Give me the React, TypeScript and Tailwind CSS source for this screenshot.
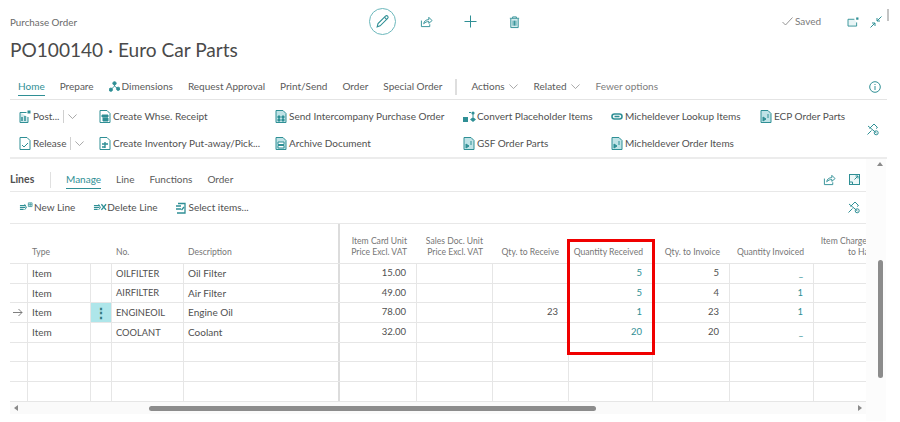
import React from "react";

const T = "#2f8f95";

function Ico({ w = 14, h = 14, vb = "0 0 14 14", children, className = "" }: { w?: number; h?: number; vb?: string; children: React.ReactNode; className?: string }) {
  return (
    <svg width={w} height={h} viewBox={vb} fill="none" stroke={T} strokeWidth="1" className={"shrink-0 " + className}>
      {children}
    </svg>
  );
}

const Pencil = () => (
  <Ico w={15} h={15}>
    <path d="M2 12l.8-3L9.8 2a1.3 1.3 0 0 1 2 2L4.8 11z" />
    <path d="M8.8 3l2.2 2.2" />
  </Ico>
);
const Share = () => (
  <Ico w={13} h={13}>
    <path d="M1.500 6v6.500h9V10" />
    <path d="M4 9.500c.3-3 2.500-4.500 5.500-4.500V2.500L13 6l-3.500 3V7C7.500 7 5.500 7.800 4 9.500z" />
  </Ico>
);
const Plus = () => (
  <Ico w={13} h={13} vb="0 0 13 13">
    <path d="M6.500 0.500v12M0.500 6.500h12" />
  </Ico>
);
const Trash = () => (
  <Ico w={13} h={14}>
    <path d="M3 3.500v9.500h8V3.500" fill="#d5ecee" />
    <path d="M2 3h10M5 3V1.500h4V3M5.500 5.500V11M7 5.500V11M8.500 5.500V11" />
  </Ico>
);
const PopOut = () => (
  <Ico w={12} h={10} vb="0 0 13 11">
    <path d="M8 2.500H1v7.500h9.500V6" fill="#e8f5f6" />
    <rect x="10" y="0.500" width="2.500" height="2.500" fill={T} stroke="none" />
  </Ico>
);
const Collapse = () => (
  <Ico w={12} h={12} vb="0 0 12 12">
    <path d="M0.500 11.500L5 7M2 7h3v3" />
    <path d="M11.500 0.500L7 5M7 2v3h3" />
  </Ico>
);
const Info = () => (
  <Ico w={12} h={12} vb="0 0 12 12">
    <circle cx="6" cy="6" r="5.300" />
    <path d="M6 5v4M6 3v1" />
  </Ico>
);
const Pin = () => (
  <Ico w={12} h={13} vb="0 0 12 13">
    <path d="M0.500 11.500L4.500 7.500M2.500 5.500L7 1l3.500 3.500-1.500 1" />
    <path d="M1 3l8.500 7" />
    <circle cx="9.200" cy="9.800" r="2" />
  </Ico>
);
const Expand = () => (
  <Ico w={11} h={11} vb="0 0 11 11">
    <rect x="0.500" y="0.500" width="10" height="10" fill="#eef8f8" />
    <path d="M5.500 5.500L9 2M6.500 2H9v2.500M0.500 8h3v2.500" />
  </Ico>
);
const Chevron = ({ c = "#8a8a8a" }: { c?: string }) => (
  <svg width="9" height="5" viewBox="0 0 11 6" fill="none" stroke={c} strokeWidth="0.900" className="shrink-0">
    <path d="M0.500 0.500l5 5 5-5" />
  </svg>
);
const Branch = () => (
  <Ico w={11} h={11} vb="0 0 12 11">
    <path d="M6 1v4M6 5L2 9M6 5l4 3" />
    <circle cx="6" cy="2" r="1.800" fill={T} />
    <circle cx="2" cy="9" r="1.800" fill={T} />
    <circle cx="10" cy="8" r="1.800" fill={T} />
  </Ico>
);
const DocA = ({ variant }: { variant: string }) => (
  <Ico w={12} h={13} vb="0 0 12 13">
    {variant === "post" ? (
      <>
        <path d="M1 2.500h6.500M1 2.500v10h8V7" fill="#cfe9eb" />
        <rect x="8.500" y="0.500" width="3" height="3" fill={T} stroke="none" />
        <path d="M3 7v4M6 6v5" strokeWidth="1.500" />
      </>
    ) : (
      <path d="M1 .500h7l3 3v9H1z" fill={variant === "xl" || variant === "send" || variant === "arch" ? "#bfe3e6" : "#fff"} />
    )}
    {variant === "xl" && <path d="M3 7l3 2-3 2zM7 5h2M7 7h2" stroke={T} fill={T} />}
    {variant === "release" && <path d="M3 8l2 2 4-4" />}
    {variant === "recv" && <path d="M3 5h6v2H3zM4 8h5v3H4z" fill={T} />}
    {variant === "pick" && <path d="M3 7h6M6 5v6M3 10h3" strokeWidth="1.400" />}
    {variant === "send" && <path d="M3 6h2v2H3zM7 6h2v2H7zM3 9h2v2H3zM7 9h2v2H7z" fill={T} />}
    {variant === "arch" && <path d="M3 5h6v2.500H3zM3 8.500h6V11H3z" fill="#fff" />}
  </Ico>
);
const ConvertIco = () => (
  <svg width="14" height="12" viewBox="0 0 14 12" className="shrink-0">
    <rect x="0" y="6" width="5" height="5" fill={T} />
    <path d="M10 6l3 2.500-3 2.500-3-2.500z" fill={T} />
    <circle cx="10" cy="2" r="1.600" fill={T} />
    <path d="M10 3v3M6 1.500h2" stroke={T} fill="none" />
  </svg>
);
const LinkIco = () => (
  <svg width="12" height="7" viewBox="0 0 12 7" fill="none" stroke={T} strokeWidth="1.600" className="shrink-0">
    <rect x="1" y="1" width="10" height="5" rx="2.500" />
    <path d="M3.500 3.500h5" />
  </svg>
);
const NewLineIco = ({ x = false }: { x?: boolean }) => (
  <svg width="14" height="11" viewBox="0 0 15 11" fill="none" stroke={T} strokeWidth="1" className="shrink-0">
    <path d="M1 3.500h6M1 5.500h6M1 7.500h4" strokeWidth="1.300" />
    <path d="M6 2l2 3.500L6 8" />
    {x ? <path d="M9 2l5 6M14 2L9 8" strokeWidth="1.400" /> : <path d="M10 .500h4v4h-4zM10 2.500h4M12 .500v4" strokeWidth=".8" />}
  </svg>
);
const SelectIco = () => (
  <svg width="12" height="12" viewBox="0 0 12 12" fill="none" stroke={T} strokeWidth="1.300" className="shrink-0">
    <path d="M3 1.500h7v9.500H2M1 4h5M1 7h5" />
    <path d="M9 5L6.500 8" />
  </svg>
);

function Tool({ icon, label }: { icon: React.ReactNode; label: string }) {
  return (
    <div className="flex h-[27px] w-full items-center">
      <span className="flex w-[14px] shrink-0 justify-start">{icon}</span>
      <span className="whitespace-nowrap">{label}</span>
    </div>
  );
}

const colClass = [
  "w-[18px]",
  "w-[63px]",
  "w-[21px]",
  "w-[72px]",
  "w-[156px]",
  "w-[77px]",
  "w-[76px]",
  "w-[76px]",
  "w-[84px]",
  "w-[77px]",
  "w-[84px]",
  "w-[53px]",
];

type Row = { h: string; sel?: boolean; no?: string; type?: string; desc?: string; price?: string; rec?: string; qr?: string; qi?: string; qinv?: string };

const rows: Row[] = [
  { h: "h-[20px]", type: "Item", no: "OILFILTER", desc: "Oil Filter", price: "15.00", qr: "5", qi: "5", qinv: "_" },
  { h: "h-[19px]", type: "Item", no: "AIRFILTER", desc: "Air Filter", price: "49.00", qr: "5", qi: "4", qinv: "1" },
  { h: "h-[20px]", sel: true, type: "Item", no: "ENGINEOIL", desc: "Engine Oil", price: "78.00", rec: "23", qr: "1", qi: "23", qinv: "1" },
  { h: "h-[20px]", type: "Item", no: "COOLANT", desc: "Coolant", price: "32.00", qr: "20", qi: "20", qinv: "_" },
  { h: "h-[19px]" },
  { h: "h-[20px]" },
  { h: "h-[20px]" },
];

function Cell({ i, children, right, teal, extra = "" }: { i: number; children?: React.ReactNode; right?: boolean; teal?: boolean; extra?: string }) {
  const bar = i === 4 ? "border-r-2 border-r-[#dcdcdc]" : i === 11 ? "" : "border-r border-r-[#e6e6e6]";
  return (
    <div
      className={
        "flex h-full shrink-0 items-center overflow-hidden " +
        colClass[i] + " " + bar + " " +
        (right ? "justify-end pr-[10px] text-[9.500px] " : "pl-[4px] ") +
        (teal ? "text-[#2f8f95] " : "") + extra
      }
    >
      {children}
    </div>
  );
}

function HeadCell({ i, children, right }: { i: number; children?: React.ReactNode; right?: boolean }) {
  return (
    <div
      className={
        "flex h-full shrink-0 items-end overflow-hidden whitespace-nowrap pb-[5px] leading-[11px] " +
        colClass[i] + " " +
        (i === 4 ? "border-r-2 border-r-[#dcdcdc] " : "") +
        (right ? "justify-end pr-[10px] text-right " : "pl-[4px] ")
      }
    >
      {children}
    </div>
  );
}

export default function App() {
  return (
    <div className="relative flex h-[422px] w-[900px] flex-col overflow-hidden bg-white font-['Lato',sans-serif] text-[10px] text-[#505050]">
      {/* header */}
      <div className="ml-[10px] mt-[8px] flex h-[27px] items-center">
        <div className="mt-[1px] w-[359px] text-[9.800px] text-[#6a6a6a]">Purchase Order</div>
        <div className="flex h-[27px] w-[27px] items-center justify-center rounded-full border border-[#6cb8bc]">
          <Pencil />
        </div>
        <div className="ml-[24px] flex items-center">
          <Share />
        </div>
        <div className="ml-[31px] flex items-center">
          <Plus />
        </div>
        <div className="ml-[31px] flex items-center">
          <Trash />
        </div>
        <div className="ml-[261px] flex w-[58px] items-center gap-[2px] text-[#7a7a7a]">
          <svg width="11" height="9" viewBox="0 0 11 9" fill="none" stroke="#8a8a8a" strokeWidth=".9" className="shrink-0">
            <path d="M.5 5l3 3 7-7.500" />
          </svg>
          <span>Saved</span>
        </div>
        <div className="ml-[7px] flex items-center">
          <PopOut />
        </div>
        <div className="ml-[11px] flex items-center">
          <Collapse />
        </div>
        <div className="ml-[5px] mt-[-14px] h-[12px] w-[2px] bg-[#c4c4c4]" />
      </div>
      <div className="ml-[10px] h-[31px] text-[19.100px] leading-[30px] text-[#4a4a4a]">PO100140 · Euro Car Parts</div>

      {/* nav */}
      <div className="ml-[10px] mt-[8px] flex h-[26px] w-[877px] items-center border-b border-[#e4e4e4] pl-[8px] text-[#5a5a5a]">
        <span className="relative mr-[15px] text-[#2f8f95]">
          Home
          <span className="absolute bottom-[-2px] left-0 h-[1px] w-full bg-[#2f8f95]" />
        </span>
        <span className="mr-[15px]">Prepare</span>
        <span className="mr-[15px] flex items-center gap-[2px]">
          <Branch />
          Dimensions
        </span>
        <span className="mr-[15px]">Request Approval</span>
        <span className="mr-[15px]">Print/Send</span>
        <span className="mr-[15px]">Order</span>
        <span>Special Order</span>
        <span className="ml-[13px] mr-[14px] h-[16px] w-[2px] bg-[#dedede]" />
        <span className="mr-[16px] flex items-center gap-[4px]">
          Actions <Chevron />
        </span>
        <span className="mr-[16px] flex items-center gap-[4px]">
          Related <Chevron />
        </span>
        <span className="text-[#7d7d7d]">Fewer options</span>
        <span className="ml-auto mr-[6px] flex">
          <Info />
        </span>
      </div>

      {/* action rows */}
      <div className="ml-[10px] flex h-[59px] w-[877px] items-start border-b-2 border-[#ececec] pt-[3px] pl-[9px]">
        <div className="flex w-[80px] flex-col">
          <div className="flex h-[27px] items-center gap-[2px]">
            <DocA variant="post" />
            <span>Post...</span>
            <span className="ml-[2px] mr-[2px] h-[13px] w-[1px] bg-[#d0d0d0]" />
            <Chevron />
          </div>
          <div className="flex h-[27px] items-center gap-[2px]">
            <DocA variant="release" />
            <span>Release</span>
            <span className="ml-[2px] mr-[2px] h-[13px] w-[1px] bg-[#d0d0d0]" />
            <Chevron />
          </div>
        </div>
        <div className="flex w-[176px] flex-col">
          <Tool icon={<DocA variant="recv" />} label="Create Whse. Receipt" />
          <Tool icon={<DocA variant="pick" />} label="Create Inventory Put-away/Pick..." />
        </div>
        <div className="flex w-[188px] flex-col">
          <Tool icon={<DocA variant="send" />} label="Send Intercompany Purchase Order" />
          <Tool icon={<DocA variant="arch" />} label="Archive Document" />
        </div>
        <div className="flex w-[148px] flex-col">
          <Tool icon={<ConvertIco />} label="Convert Placeholder Items" />
          <Tool icon={<DocA variant="xl" />} label="GSF Order Parts" />
        </div>
        <div className="flex w-[149px] flex-col">
          <Tool icon={<LinkIco />} label="Micheldever Lookup Items" />
          <Tool icon={<DocA variant="xl" />} label="Micheldever Order Items" />
        </div>
        <div className="flex w-[110px] flex-col">
          <Tool icon={<DocA variant="xl" />} label="ECP Order Parts" />
        </div>
        <div className="ml-[-3px] mt-[20px] flex">
          <Pin />
        </div>
      </div>

      {/* lines section + scrollbar */}
      <div className="flex">
        <div className="ml-[10px] w-[856px]">
          <div className="flex h-[33px] items-center border-b border-[#e8e8e8] pt-[9px] text-[#5a5a5a]">
            <span className="w-[26px] text-[10.500px] font-bold text-[#505050]">Lines</span>
            <span className="ml-[14px] mr-[15px] h-[16px] w-[1px] bg-[#e0e0e0]" />
            <span className="relative mr-[15px] text-[#2f8f95]">
              Manage
              <span className="absolute bottom-[-2px] left-0 h-[1px] w-full bg-[#2f8f95]" />
            </span>
            <span className="mr-[15px]">Line</span>
            <span className="mr-[15px]">Functions</span>
            <span>Order</span>
            <span className="ml-auto mr-[13px] flex">
              <Share />
            </span>
            <span className="mr-[6px] flex">
              <Expand />
            </span>
          </div>
          <div className="flex h-[32px] items-center border-b border-[#e8e8e8] pl-[9px]">
            <span className="mr-[18px] flex items-center gap-[1px]">
              <NewLineIco />
              New Line
            </span>
            <span className="mr-[17px] flex items-center">
              <NewLineIco x />
              Delete Line
            </span>
            <span className="flex items-center gap-[2px]">
              <SelectIco />
              Select items...
            </span>
            <span className="ml-auto mr-[6px] flex">
              <Pin />
            </span>
          </div>

          {/* table head */}
          <div className="flex h-[40px] border-b border-[#e6e6e6] text-[8.600px] text-[#767676]">
            <HeadCell i={0} />
            <HeadCell i={1}>Type</HeadCell>
            <HeadCell i={2} />
            <HeadCell i={3}>No.</HeadCell>
            <HeadCell i={4}>Description</HeadCell>
            <HeadCell i={5} right>
              <span>
                Item Card Unit
                <br />
                Price Excl. VAT
              </span>
            </HeadCell>
            <HeadCell i={6} right>
              <span>
                Sales Doc. Unit
                <br />
                Price Excl. VAT
              </span>
            </HeadCell>
            <HeadCell i={7} right>Qty. to Receive</HeadCell>
            <HeadCell i={8} right>Quantity Received</HeadCell>
            <HeadCell i={9} right>Qty. to Invoice</HeadCell>
            <HeadCell i={10} right>Quantity Invoiced</HeadCell>
            <div className={"flex h-full shrink-0 items-end overflow-hidden pb-[5px] leading-[11px] " + colClass[11]}>
              <span className="w-[71px] shrink-0 whitespace-nowrap text-right">
                Item Charge Qty.
                <br />
                to Handle
              </span>
            </div>
          </div>

          {/* table rows */}
          {rows.map((r, idx) => (
            <div key={idx} className={"flex border-b border-[#e6e6e6] " + r.h}>
              <Cell i={0} extra="!pl-[1px]">
                {r.sel && (
                  <svg width="13" height="9" viewBox="0 0 13 9" fill="none" stroke="#707070" strokeWidth=".9">
                    <path d="M2 4.500h9M7.500 1l3.500 3.500L7.500 8" />
                  </svg>
                )}
              </Cell>
              <Cell i={1}>{r.type}</Cell>
              <Cell i={2} extra={r.sel ? "!pl-0 justify-center bg-[#aee6ea] text-[14px] font-bold text-[#33787c]" : ""}>
                {r.sel ? "⋮" : null}
              </Cell>
              <Cell i={3} extra="text-[9.300px]">{r.no}</Cell>
              <Cell i={4}>{r.desc}</Cell>
              <Cell i={5} right>{r.price}</Cell>
              <Cell i={6} right />
              <Cell i={7} right>{r.rec}</Cell>
              <Cell i={8} right teal>{r.qr}</Cell>
              <Cell i={9} right>{r.qi}</Cell>
              <Cell i={10} right teal>{r.qinv}</Cell>
              <Cell i={11} />
            </div>
          ))}

          {/* horizontal scrollbar */}
          <div className="flex h-[12px] items-center bg-[#fafafa] pl-[4px] pr-[4px]">
            <svg width="5" height="6" viewBox="0 0 5 6" className="shrink-0">
              <path d="M4 0v6L0 3z" fill="#8a8a8a" />
            </svg>
            <div className="ml-[130px] h-[5px] w-[447px] rounded-full bg-[#8c8c8c]" />
            <svg width="5" height="6" viewBox="0 0 5 6" className="ml-auto shrink-0">
              <path d="M1 0v6l4-3z" fill="#8a8a8a" />
            </svg>
          </div>
        </div>

        {/* vertical scrollbar */}
        <div className="flex h-[262px] w-[20px] flex-col items-center bg-[#fcfcfc] pl-[8px] pt-[3px]">
          <svg width="6" height="5" viewBox="0 0 6 5" className="shrink-0">
            <path d="M0 4h6L3 0z" fill="#8a8a8a" />
          </svg>
          <div className="mt-[93px] h-[118px] w-[5px] rounded-full bg-[#8c8c8c]" />
        </div>
      </div>

      {/* annotation */}
      <div className="absolute left-[567px] top-[239px] h-[116px] w-[88px] border-[3px] border-[#f00000]" />
    </div>
  );
}
